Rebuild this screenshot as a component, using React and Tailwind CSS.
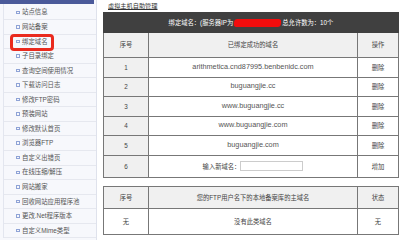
import React from "react";

const menu = [
  "站点信息",
  "网站备案",
  "绑定域名",
  "子目录绑定",
  "查询空间使用情况",
  "下载访问日志",
  "修改FTP密码",
  "预装网站",
  "修改默认首页",
  "浏览器FTP",
  "自定义出错页",
  "在线压缩/解压",
  "网站搬家",
  "回收网站应用程序池",
  "更改.Net程序版本",
  "自定义Mime类型",
];

const domains = [
  "arithmetica.cnd87995.benbenidc.com",
  "buguangjie.cc",
  "www.buguangjie.cc",
  "www.buguangjie.com",
  "buguangjie.com",
];

const cjk = { fontFamily: '"Liberation Sans", "Noto Sans CJK SC", sans-serif' };

export default function App() {
  return (
    <div className="flex w-[402px] h-[240px] overflow-hidden bg-white text-[#444]" style={cjk}>
      {/* sidebar */}
      <div className="w-[97px] shrink-0 bg-[#f7f8fc] border-r border-[#dfe2ec]">
        <div className="h-[4px] bg-[#4b5a9a] mr-[2px]" />
        <ul className="pt-[1.5px] ml-[3px] border-l border-[#e3e6ef]">
          {menu.map((item, i) => (
            <li
              key={item}
              className="relative h-[14.55px] flex items-center pl-[12px] border-b border-[#e6e8ef] text-[6.4px] text-[#555]"
            >
              <span className="w-[3.5px] h-[3.5px] border border-[#8fa3d6] mr-[2.5px]" />
              {item}
              {i === 2 && (
                <span className="absolute left-[6px] top-[-1px] w-[44px] h-[17px] border-[3px] border-[#ea2a1e] rounded-[4px]" />
              )}
            </li>
          ))}
        </ul>
      </div>

      {/* main */}
      <div className="flex-1 pl-[6px] pr-[3px]">
        <div className="h-[12px] flex items-center pl-[5px] text-[6.2px] text-[#333] underline">
          虚拟主机自助管理
        </div>

        <table className="w-full border-collapse text-[6.3px] text-center">
          <thead>
            <tr className="h-[20px] bg-[#404040] text-white">
              <th colSpan={3} className="font-normal border border-[#404040]">
                绑定域名：(服务器IP为
                <span className="inline-block align-middle w-[47px] h-[8px] mx-[1px] bg-[#f20d0d] rounded-[3px] -skew-x-6" />
                总允许数为：10个
              </th>
            </tr>
            <tr className="h-[25px] bg-[#f0f0f0]">
              <th className="w-[45px] font-normal border border-[#777]">序号</th>
              <th className="font-normal border border-[#777]">已绑定成功的域名</th>
              <th className="w-[41px] font-normal border border-[#777]">操作</th>
            </tr>
          </thead>
          <tbody>
            {domains.map((d, i) => (
              <tr key={d} className="h-[19.5px]">
                <td className="bg-[#f0f0f0] border border-[#777]">{i + 1}</td>
                <td className="border border-[#777] text-[7.3px] text-[#555]">{d}</td>
                <td className="border border-[#777]">删除</td>
              </tr>
            ))}
            <tr className="h-[22.5px]">
              <td className="bg-[#f0f0f0] border border-[#777]">6</td>
              <td className="border border-[#777]">
                <div className="flex items-center justify-center">
                  输入新域名：
                  <span className="inline-block w-[63px] h-[10px] border border-[#ccc] bg-white" />
                </div>
              </td>
              <td className="border border-[#777]">增加</td>
            </tr>
          </tbody>
        </table>

        <table className="w-full border-collapse text-[6.3px] text-center mt-[8px]">
          <thead>
            <tr className="h-[22px] bg-[#f0f0f0]">
              <th className="w-[45px] font-normal border border-[#777]">序号</th>
              <th className="font-normal border border-[#777]">您的FTP用户名下的本地备案库的主域名</th>
              <th className="w-[41px] font-normal border border-[#777]">状态</th>
            </tr>
          </thead>
          <tbody>
            <tr className="h-[26px]">
              <td className="border border-[#777]">无</td>
              <td className="border border-[#777]">没有此类域名</td>
              <td className="border border-[#777]">无</td>
            </tr>
          </tbody>
        </table>
      </div>
    </div>
  );
}
